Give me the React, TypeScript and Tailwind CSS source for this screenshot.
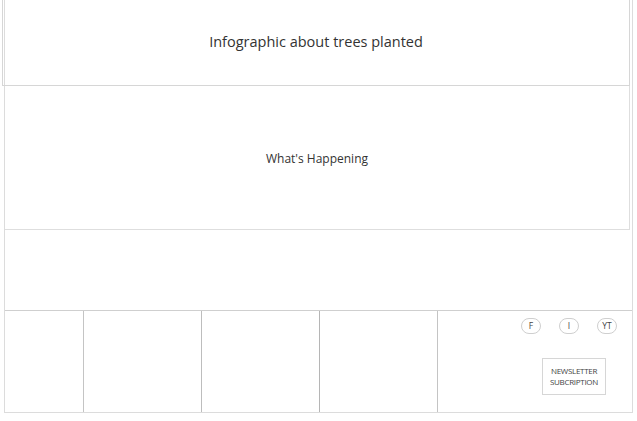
export default function App() {
  return (
    <div className="w-[637px] h-[421px] bg-white overflow-hidden font-['Open_Sans',sans-serif] text-[#333]">
      <div className="ml-[4px] w-[629px] border-x border-b border-[#dcdcdc]">
        {/* infographic */}
        <div className="ml-[-3px] w-[628px] h-[86px] border-x border-b border-[#d6d6d6] flex items-center justify-center">
          <span className="text-[14.5px] pb-[2px]">Infographic about trees planted</span>
        </div>

        {/* what's happening */}
        <div className="w-[625px] h-[144px] border-r border-b border-[#dedede] flex items-center justify-center">
          <span className="text-[12px] pt-[2px]">What's Happening</span>
        </div>

        <div className="h-[80px]" />

        {/* footer */}
        <div className="h-[102px] border-t border-[#cfcfcf] flex">
          <div className="w-[79px] border-r border-[#c4c4c4]" />
          <div className="w-[118px] border-r border-[#bdbdbd]" />
          <div className="w-[118px] border-r border-[#b5b5b5]" />
          <div className="w-[118px] border-r border-[#c4c4c4]" />
          <div className="flex-1 flex flex-col items-end">
            <div className="mt-[7px] mr-[15px] flex gap-[18px]">
              {['F', 'I', 'YT'].map(label => (
                <div
                  key={label}
                  className="w-[20px] h-[16px] rounded-full border border-[#cfcfcf] flex items-center justify-center text-[8.5px] leading-none text-[#444] pt-[1px]"
                >
                  {label}
                </div>
              ))}
            </div>
            <div className="mt-[24px] mr-[26px] w-[64px] h-[37px] border border-[#d6d6d6] flex items-center justify-center text-center text-[8px] leading-[11px] tracking-[-0.3px] text-[#444] pb-[1px]">
              NEWSLETTER
              <br />
              SUBCRIPTION
            </div>
          </div>
        </div>
      </div>
    </div>
  );
}
